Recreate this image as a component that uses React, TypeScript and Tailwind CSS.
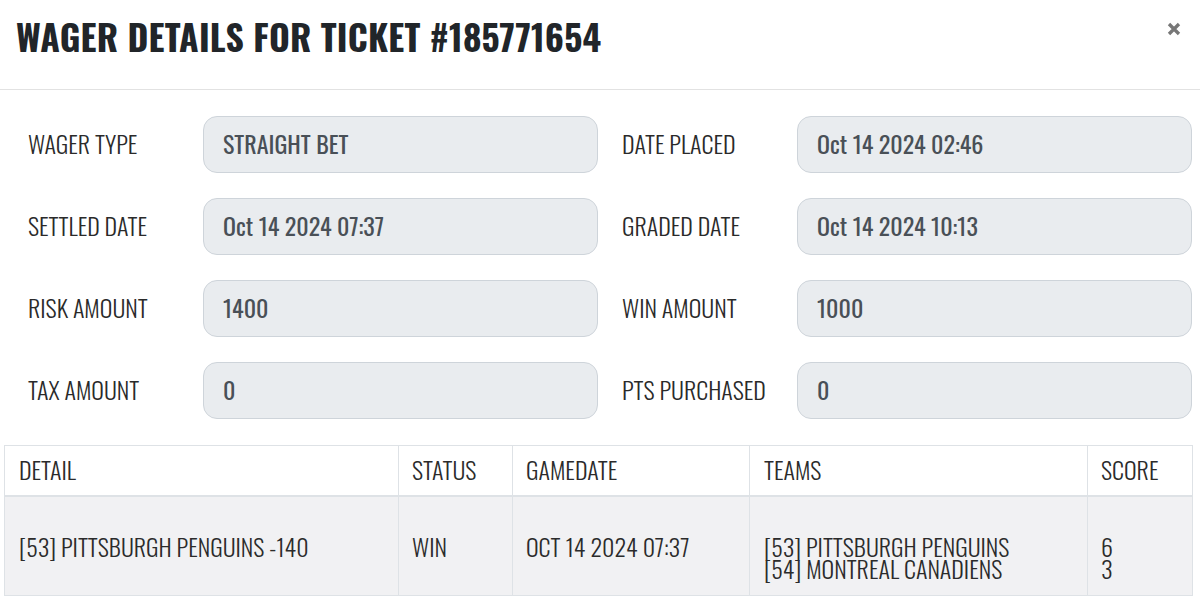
const fields: [string, string, string, string][] = [
  ["WAGER TYPE", "STRAIGHT BET", "DATE PLACED", "Oct 14 2024 02:46"],
  ["SETTLED DATE", "Oct 14 2024 07:37", "GRADED DATE", "Oct 14 2024 10:13"],
  ["RISK AMOUNT", "1400", "WIN AMOUNT", "1000"],
  ["TAX AMOUNT", "0", "PTS PURCHASED", "0"],
];

function Field({ label, value }: { label: string; value: string }) {
  return (
    <div className="flex items-center">
      <div className="w-[175px] shrink-0 pb-[4px] text-[24px] font-light text-[#2a2a2a] leading-none">{label}</div>
      <div className="flex-1 h-[57px] flex items-center rounded-[14px] border border-[#ced4da] bg-[#e9ecef] pl-[19px] pb-[3px] text-[24px] text-[#495057] leading-none">
        {value}
      </div>
    </div>
  );
}

export default function App() {
  return (
    <div className="w-[1200px] h-[603px] overflow-hidden bg-white font-[Oswald,'Roboto_Condensed',sans-serif]">
      <div className="h-[90px] border-b border-[#e2e2e2] flex items-start justify-between pl-[16px] pr-[19px]">
        <h1 className="mt-[10px] text-[35.6px] font-bold text-[#212529] tracking-[0.2px]">
          WAGER DETAILS FOR TICKET #185771654
        </h1>
        <svg className="mt-[22px]" width="14" height="14" viewBox="0 0 14 14" aria-label="close">
          <path d="M2 2 L12 12 M12 2 L2 12" stroke="#777" strokeWidth="3.3" strokeLinecap="butt" />
        </svg>
      </div>

      <div className="pt-[26px] pl-[28px] pr-[8px] grid grid-cols-2 gap-x-[24px] gap-y-[25px]">
        {fields.map(([l1, v1, l2, v2]) => [
          <Field key={l1} label={l1} value={v1} />,
          <Field key={l2} label={l2} value={v2} />,
        ])}
      </div>

      <div className="mt-[26px] ml-[4px] w-[1189px] border border-[#dee2e6] text-[24px] font-light text-[#2b2b2b]">
        <div className="grid grid-cols-[393px_114px_237px_338px_1fr] bg-white border-b-2 border-[#dee2e6] h-[51px]">
          <div className="px-[14px] pb-[3px] flex items-center">DETAIL</div>
          <div className="px-[13px] pb-[3px] flex items-center border-l border-[#dee2e6]">STATUS</div>
          <div className="px-[13px] pb-[3px] flex items-center border-l border-[#dee2e6]">GAMEDATE</div>
          <div className="px-[14px] pb-[3px] flex items-center border-l border-[#dee2e6]">TEAMS</div>
          <div className="px-[13px] pb-[3px] flex items-center border-l border-[#dee2e6]">SCORE</div>
        </div>
        <div className="grid grid-cols-[393px_114px_237px_338px_1fr] bg-[#f1f1f3] h-[98px] leading-[22px]">
          <div className="px-[14px] pt-[38px]">[53] PITTSBURGH PENGUINS -140</div>
          <div className="px-[13px] pt-[38px] border-l border-[#dee2e6]">WIN</div>
          <div className="px-[13px] pt-[38px] border-l border-[#dee2e6]">OCT 14 2024 07:37</div>
          <div className="px-[14px] pt-[38px] border-l border-[#dee2e6]">
            <div>[53] PITTSBURGH PENGUINS</div>
            <div>[54] MONTREAL CANADIENS</div>
          </div>
          <div className="px-[13px] pt-[38px] border-l border-[#dee2e6]">
            <div>6</div>
            <div>3</div>
          </div>
        </div>
      </div>
    </div>
  );
}
